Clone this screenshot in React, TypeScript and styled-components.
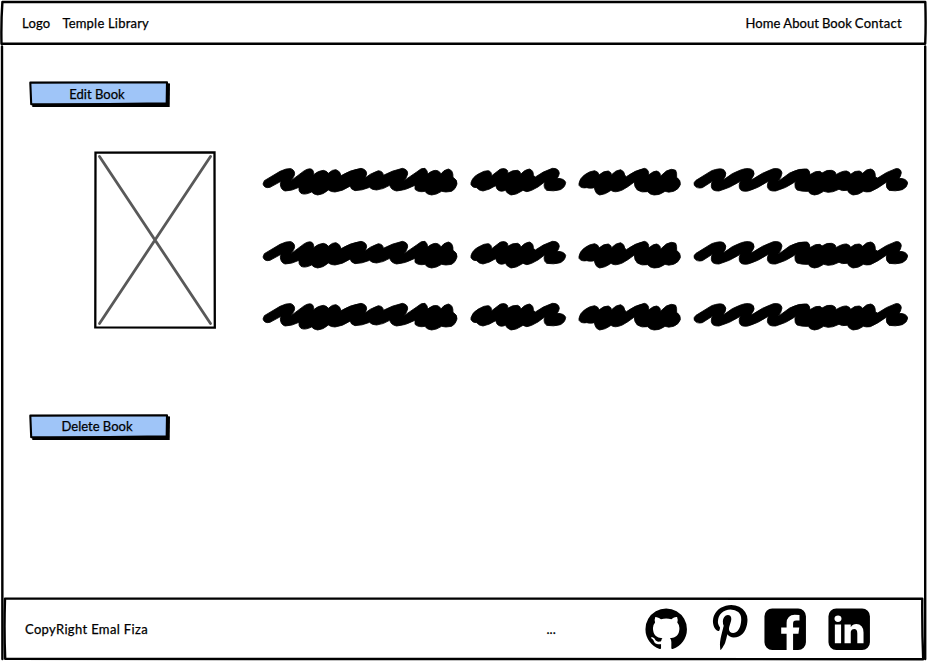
import React from 'react';
import styled, { createGlobalStyle } from 'styled-components';

const GlobalStyle = createGlobalStyle`
  * { box-sizing: border-box; }
  body { margin: 0; background: #fff; overflow: hidden; }
`;

const Page = styled.div`
  width: 927px;
  height: 661px;
  display: flex;
  flex-direction: column;
  position: relative;
  color: #000;
  font-family: Lato, 'Liberation Sans', sans-serif;
  font-size: 13px;
  line-height: 16px;
  -webkit-text-stroke: 0.25px #000;
`;

const Outline = styled.svg`
  position: absolute;
  inset: 0;
  pointer-events: none;
  overflow: visible;
  fill: none;
  stroke: #000;
  stroke-width: 2.4;
  stroke-linecap: round;
  stroke-linejoin: round;
`;

const Header = styled.header`
  height: 45px;
  flex: none;
  display: flex;
  align-items: center;
  justify-content: space-between;
  padding: 0 25px 0 22px;
`;

const Brand = styled.div`
  display: flex;
  gap: 12px;
`;

const Label = styled.span<{ $spacing?: number }>`
  white-space: nowrap;
  letter-spacing: ${(p) => p.$spacing ?? 0}px;
`;

const Nav = styled.nav`
  display: flex;
  gap: 3px;
`;

const Main = styled.main`
  height: 553px;
  flex: none;
  display: flex;
  flex-direction: column;
  align-items: flex-start;
  padding: 36px 0 0 29px;
`;

const Button = styled.button`
  position: relative;
  width: 141px;
  height: 26px;
  padding: 0 5px 1px 0;
  border: 0;
  background: none;
  color: inherit;
  font: inherit;
  -webkit-text-stroke: inherit;
`;

const ButtonShape = styled.svg`
  position: absolute;
  inset: 0;
`;

const ButtonText = styled(Label)`
  position: relative;
`;

const Book = styled.section`
  display: flex;
  gap: 47px;
  margin: 44px 0 79px 65px;
`;

const Cover = styled.svg`
  width: 122px;
  height: 178px;
  flex: none;
`;

const Details = styled.div`
  display: grid;
  grid-template-rows: 72.5px 62px 40px;
  padding-top: 9px;
`;

const Line = styled.div`
  display: flex;
  height: 40px;
`;

const Scribble = styled.svg<{ $width: number }>`
  width: ${(p) => p.$width}px;
  height: 40px;
  flex: none;
  overflow: visible;
  stroke: #000;
  stroke-width: 2.5;
  stroke-linejoin: round;
`;

const Footer = styled.footer`
  height: 62px;
  flex: none;
  display: flex;
  align-items: center;
  padding-left: 25px;
`;

const Dots = styled(Label)`
  width: 95px;
  margin-left: auto;
`;

const Social = styled.div`
  display: grid;
  grid-template-columns: 64.5px 54.5px 64px 102.5px;
`;

const Icon = styled.svg`
  width: 48.4px;
  height: 48.4px;
`;

const words = [
  {
    x: 24,
    width: 208,
    d: 'M28 62L75 34Q95 24 108 26Q122 32 118 46Q112 58 108 62L148 32Q165 22 173 30Q177 36 176 44Q190 32 205 31Q216 33 220 40Q232 28 243 29Q256 33 258 47Q285 30 318 25Q335 28 335 42Q332 55 322 60Q345 40 370 32Q385 34 385 46Q410 32 442 25Q459 28 458 42Q455 54 447 62L485 36Q500 22 510 25Q518 32 518 42Q535 28 548 32Q556 36 558 42Q565 30 580 27Q595 30 594 52Q608 60 606 72Q602 88 590 94Q570 98 560 94Q545 104 530 105Q515 104 510 94Q490 98 480 88L480 76Q450 92 425 93Q408 90 404 76Q385 88 365 90Q350 90 344 82Q320 92 300 92Q286 88 286 78Q262 94 240 96Q228 96 220 90Q205 104 188 105Q175 103 170 96Q150 106 138 100Q130 94 132 82Q110 93 90 93Q76 88 76 72L78 64L45 82Q28 86 24 72Z',
  },
  {
    x: 18,
    width: 108,
    d: 'M18 68Q22 52 40 42Q58 31 70 32Q81 35 79 48L105 28Q120 22 128 32L128 40Q143 29 158 31Q167 34 167 43Q178 29 193 27Q206 31 205 46L211 51Q234 34 262 25Q281 24 283 40Q281 51 276 55Q297 55 302 67Q301 82 286 89Q265 95 245 91Q235 84 238 70L240 65Q219 83 200 91Q184 99 174 91Q154 105 138 105Q125 100 121 91Q105 98 96 87L92 77Q72 90 54 93Q42 92 35 83Q23 84 18 74Z',
  },
  {
    x: 342,
    width: 115,
    d: 'M342 70Q344 56 358 45Q374 33 389 32Q401 35 402 45Q416 32 430 33Q439 37 440 44Q452 30 467 29Q479 34 479 45L484 50Q510 31 538 25Q553 28 551 45Q566 32 575 33Q588 37 586 49L604 33Q620 24 632 31Q636 38 635 52Q648 61 646 74Q641 88 626 94Q610 99 600 94Q582 107 567 105Q555 104 548 95Q530 99 517 90Q507 80 508 66Q489 81 472 90Q449 100 438 91Q421 104 404 105Q393 102 390 91L388 83Q377 86 365 83Q348 86 342 76Z',
  },
  {
    x: 12,
    width: 214,
    d: 'M18 61L65 32Q90 23 101 29Q112 38 105 51L99 61Q127 37 154 29Q180 21 190 32Q196 42 187 53L183 61Q217 37 250 26Q274 23 276 39Q274 53 265 64L299 39Q328 24 352 27Q360 32 360 44Q377 31 390 34L396 39Q412 28 425 31Q438 34 438 44Q457 32 470 33Q480 36 482 43Q494 31 508 33Q515 36 518 40Q529 27 542 27Q557 30 556 51L563 54Q590 35 617 26Q632 24 634 38Q632 50 627 55Q650 55 653 69Q652 82 637 89Q615 95 597 91Q587 84 589 70L591 65Q563 86 541 95Q528 97 520 94Q506 105 489 105Q477 102 472 91Q455 94 447 88Q427 98 414 97L401 94Q385 105 373 105Q358 103 355 94Q335 95 321 90Q313 84 315 69L318 64Q286 86 257 93Q234 95 232 79Q232 69 236 63Q202 86 174 93Q151 97 148 82Q146 73 151 64Q118 85 87 93Q66 94 64 80Q63 72 67 64L37 83Q20 87 13 76Q9 68 18 61Z',
  },
];

const icons = {
  github:
    'M896 128q209 0 385.5 103t279.5 279.5 103 385.5q0 251-146.5 451.5t-378.5 277.5q-27 5-40-7t-13-30q0-3 .5-76.5t.5-134.5q0-97-52-142 57-6 102.5-18t94-39 81-66.5 53-105 20.5-150.5q0-119-79-206 37-91-8-204-28-9-81 11t-92 44l-38 24q-93-26-192-26t-192 26q-16-11-42.5-27t-83.5-38.5-85-13.5q-45 113-8 204-79 87-79 206 0 85 20.5 150t52.5 105 80.5 67 94 39 102.5 18q-39 36-49 103-21 10-45 15t-57 5-65.5-21.5-55.5-62.5q-19-32-48.5-52t-49.5-24l-20-3q-21 0-29 4.500t-5 11.500 9 14 13 12l7 5q22 10 43.500 38t31.500 51l10 23q13 38 44 61.500t67 30 69.500 7 55.500-3.500l23-4q0 38 .5 88.500t.5 54.500q0 18-13 30t-40 7q-232-77-378.500-277.500t-146.500-451.500q0-209 103-385.500t279.500-279.500 385.500-103z',
  pinterest:
    'M256 597q0-108 37.5-203.5t103.5-166.5 152-123 185-78 202-26q158 0 294 66.5t221 193.5 85 287q0 96-19 188t-60 177-100 149.5-145 103-189 38.5q-68 0-135-32t-96-88q-10 39-28 112.5t-23.5 95-20.5 71-26 71-32 62.5-46 77.5-62 86.5l-14 5-9-10q-15-157-15-188 0-92 21.5-206.5t66.5-287.5 52-203q-32-65-32-169 0-83 52-156t132-73q61 0 95 40.5t34 102.5q0 66-44 191t-44 187q0 63 45 104.5t109 41.5q55 0 102-25t78.5-68 56-95 38-110.5 20-111 6.5-99.5q0-173-109.5-269.5t-285.5-96.5q-200 0-334 129.5t-134 328.5q0 44 12.5 85t27 65 27 45.5 12.5 30.5q0 28-15 73t-37 45q-2 0-17-3-51-15-90.5-56t-61-94.5-32.5-108-11-106.5z',
  facebook:
    'M1376 128q119 0 203.5 84.5t84.5 203.5v960q0 119-84.5 203.5t-203.5 84.5h-188v-595h199l30-232h-229v-148q0-56 23.5-84t91.5-28l122-1v-207q-63-9-178-9-136 0-217.5 80t-81.5 226v171h-200v232h200v595h-532q-119 0-203.5-84.5t-84.5-203.5v-960q0-119 84.5-203.5t203.5-84.5h960z',
  linkedin:
    'M365 1414h231v-694h-231v694zm246-908q-1-52-36-86t-93-34-94.5 34-36.5 86q0 51 35.5 85.5t92.5 34.5h1q59 0 95-34.5t36-85.5zm585 908h231v-398q0-154-73-233t-193-79q-136 0-209 117h2v-101h-231q3 66 0 694h231v-388q0-38 7-56 15-35 45-59.5t74-24.5q116 0 116 157v371zm468-998v960q0 119-84.5 203.5t-203.5 84.5h-960q-119 0-203.5-84.5t-84.5-203.5v-960q0-119 84.5-203.5t203.5-84.5h960q119 0 203.5 84.5t84.5 203.5z',
};

function SketchButton({ children, spacing }: { children: React.ReactNode; spacing: number }) {
  return (
    <Button>
      <ButtonShape width="141" height="26" viewBox="0 0 141 26">
        <path d="M3 22L137 2L141 2.5L140.700 25.900L3.300 25.900Z" />
        <path d="M1.300 1.600L138 1.200L137.700 22.300Q70 23.500 2.200 23.300Z" fill="#9fc5f8" stroke="#000" strokeWidth="2.100" strokeLinejoin="round" />
      </ButtonShape>
      <ButtonText $spacing={spacing}>{children}</ButtonText>
    </Button>
  );
}

export default function App() {
  return (
    <Page>
      <GlobalStyle />
      <Outline width="927" height="661" viewBox="0 0 927 661">
        <path d="M2.400 1.900Q450 1.300 925.300 2Q926 25 925.200 43.800Q450 44.500 1.500 43.700Q1 22 2.400 1.900" />
        <path d="M2 46.500Q1.500 350 2.400 659M925.200 46.500Q924.300 350 925.200 659" />
        <path d="M5 598.600Q460 598 922.300 598.700Q922 630 923.200 659.200Q450 659.600 5.200 658.900Q4 630 5 598.600" />
      </Outline>
      <Header>
        <Brand>
          <Label $spacing={0.2}>Logo</Label>
          <Label $spacing={0.2}>Temple Library</Label>
        </Brand>
        <Nav>
          <Label $spacing={0.05}>Home</Label>
          <Label $spacing={0.05}>About</Label>
          <Label $spacing={0.05}>Book</Label>
          <Label $spacing={0.3}>Contact</Label>
        </Nav>
      </Header>
      <Main>
        <SketchButton spacing={0}>Edit Book</SketchButton>
        <Book>
          <Cover viewBox="0 0 122 178" fill="none">
            <path d="M1.500 1.700L120.500 1.300L120.800 176.600L1.300 176.400Z" stroke="#000" strokeWidth="2.300" />
            <path d="M5.500 5.500L116.500 172.500M116.500 5.500L5.500 172.500" stroke="#595959" strokeWidth="2.800" strokeLinecap="round" />
          </Cover>
          <Details>
            {[0, 1, 2].map((line) => (
              <Line key={line}>
                {words.map((word, i) => (
                  <Scribble key={i} $width={word.width} viewBox={`${word.x} 0 ${word.width * 3} 120`}>
                    <path d={word.d} />
                  </Scribble>
                ))}
              </Line>
            ))}
          </Details>
        </Book>
        <SketchButton spacing={0}>Delete Book</SketchButton>
      </Main>
      <Footer>
        <Label $spacing={0.35}>CopyRight Emal Fiza</Label>
        <Dots>...</Dots>
        <Social>
          {Object.entries(icons).map(([name, d]) => (
            <Icon key={name} viewBox="0 0 1792 1792" aria-label={name}>
              <path d={d} />
            </Icon>
          ))}
        </Social>
      </Footer>
    </Page>
  );
}
